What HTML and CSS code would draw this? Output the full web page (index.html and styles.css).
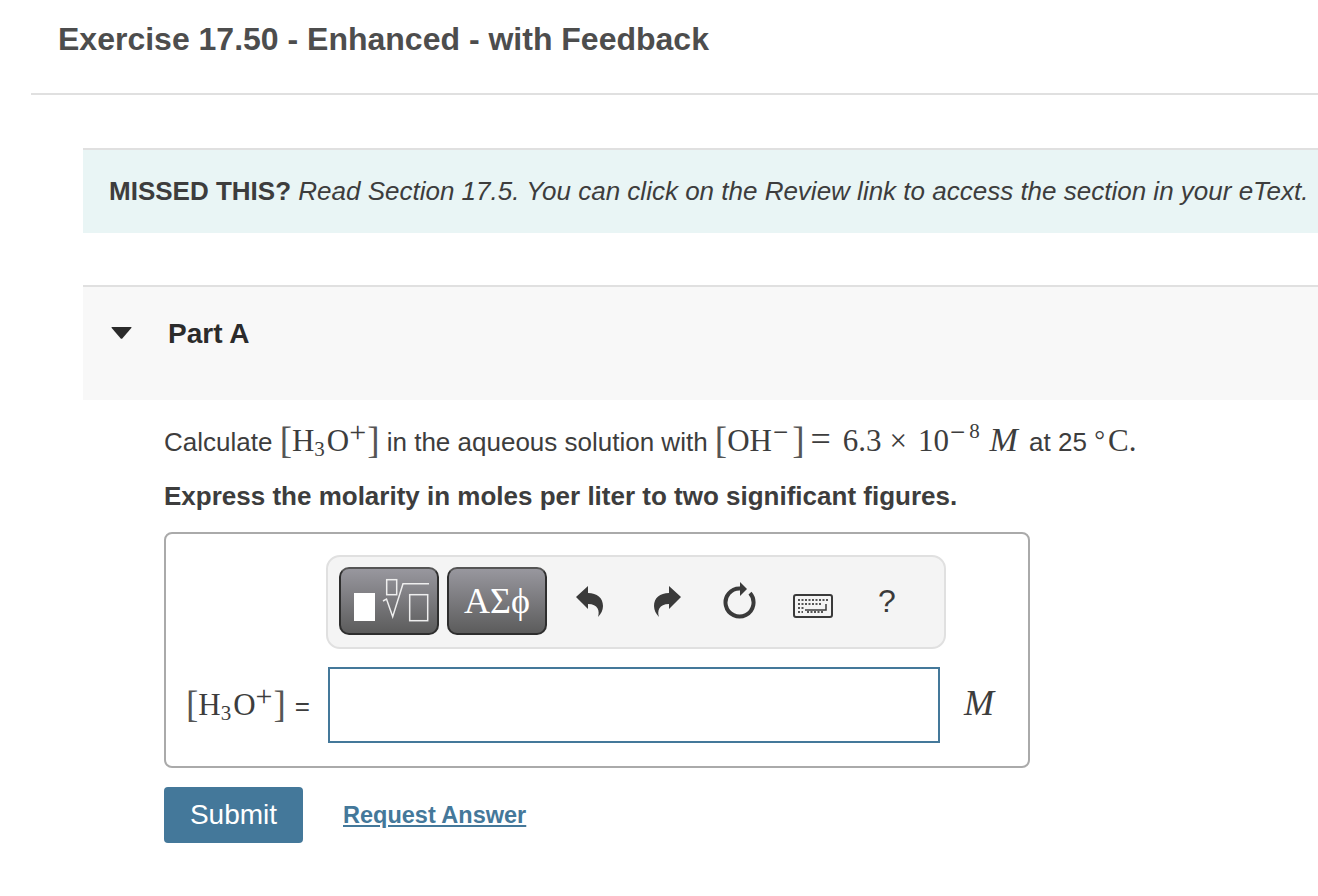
FILE: index.html
```html
<!DOCTYPE html>
<html lang="en">
<head>
  <meta charset="UTF-8" />
  <title>Exercise 17.50 - Enhanced - with Feedback</title>
  <link rel="stylesheet" href="styles.css">
</head>
<body>
  <header class="title-bar">
    <h1>Exercise 17.50 - Enhanced - with Feedback</h1>
  </header>

  <main class="content">
    <div class="note">
      <strong>MISSED THIS?</strong> <em>Read Section 17.5. You can click on the Review link to access the section in your eText.</em>
    </div>

    <div class="part-head">
      <svg class="caret" width="21" height="12" viewBox="0 0 21 12"><path d="M1 0H20Q21 0 20.300 1L11.300 11.500Q10.500 12 9.700 11.500L.7 1Q0 0 1 0Z" fill="#2b2b2b"/></svg>
      <h2>Part A</h2>
    </div>

    <section class="part-body">
      <p class="question">Calculate <span class="math"><span class="br">[</span>H<sub>3</sub>O<sup class="sign plus">+</sup><span class="br">]</span></span> in the aqueous solution with <span class="math"><span class="br">[</span>OH<sup class="sign minus">&minus;</sup><span class="br">]</span><span class="op equals">=</span>6.3<span class="op times">&times;</span>10<sup class="sign minus">&minus;</sup><sup>8</sup> <i class="var">M</i></span> at 25 <span class="math"><sup class="sign degree">&deg;</sup>C.</span></p>
      <p class="instruction">Express the molarity in moles per liter to two significant figures.</p>

      <div class="answer-box">
        <div class="toolbar">
          <button class="tool-btn" type="button">
            <svg width="96" height="64" viewBox="0 0 96 64">
              <rect x="13" y="24" width="21" height="28" fill="#fff"/>
              <g fill="none" stroke="#eee" stroke-width="1.500">
                <rect x="45.700" y="10.700" width="10" height="15"/>
                <path d="M42 32l3.500-2 6.200 17.700L62 14.700h26"/>
                <rect x="68.700" y="25.700" width="18" height="26"/>
              </g>
            </svg>
          </button>
          <button class="tool-btn greek" type="button">&Alpha;&Sigma;&#981;</button>
          <svg class="undo" width="28" height="31" viewBox="0 0 28 31"><path d="M0 11 12 0v7c9 0 15 5 15 13 0 4-2 8-5 11 2-6 0-13-10-13v5Z" fill="#3a3a3a"/></svg>
          <svg class="redo" width="28" height="31" viewBox="0 0 28 31"><path d="M28 11 16 0v7C7 7 1 12 1 20c0 4 2 8 5 11-2-6 0-13 10-13v5Z" fill="#3a3a3a"/></svg>
          <svg class="refresh" width="33" height="37" viewBox="0 0 33 37"><path d="M17 6.500A14 14 0 1 0 27 11.200" fill="none" stroke="#3a3a3a" stroke-width="4"/><path d="M17 0 24 7 17 14Z" fill="#3a3a3a"/></svg>
          <svg class="keyboard" width="40" height="24" viewBox="0 0 40 24">
            <rect x="1" y="1" width="38" height="22" rx="2" fill="none" stroke="#3a3a3a" stroke-width="2"/>
            <path d="M5 6h30M5 10h24M5 14h6M14 18h16M5 18h5" stroke="#555" stroke-width="2" stroke-dasharray="2 1.500"/>
            <path d="M33 10v6H12" fill="none" stroke="#3a3a3a" stroke-width="1.500"/>
          </svg>
          <span class="help">?</span>
        </div>

        <div class="answer-row">
          <span class="answer-label"><span class="math"><span class="br">[</span>H<sub>3</sub>O<sup class="sign plus">+</sup><span class="br">]</span></span><span class="label-eq">=</span></span>
          <input class="answer-input" type="text" aria-label="answer">
          <i class="unit">M</i>
        </div>
      </div>

      <div class="actions">
        <button class="submit" type="button">Submit</button>
        <a class="request" href="#">Request Answer</a>
      </div>
    </section>
  </main>
</body>
</html>
```

FILE: styles.css
```css
body {
  margin: 0;
  background-color: #fff;
  color: #3d3d3d;
  font-family: "Liberation Sans", Arial, sans-serif;
  font-size: 26px;
  overflow: hidden;
}
.title-bar {
  margin-left: 31px;
  height: 93px;
  padding-left: 27px;
  border-bottom: 2px solid #e0e0e0;
}
h1 {
  margin: 0;
  padding-top: 21px;
  font-size: 32px;
  line-height: 37px;
  color: #4d4d4d;
}
.content {
  margin-left: 83px;
}
.note {
  margin-top: 53px;
  height: 83px;
  padding-left: 26px;
  border-top: 2px solid #e0e0e0;
  background-color: #e9f5f5;
  line-height: 83px;
  white-space: nowrap;
  overflow: hidden;
}
.part-head {
  display: flex;
  align-items: flex-start;
  margin-top: 52px;
  height: 113px;
  padding-left: 28px;
  border-top: 2px solid #e0e0e0;
  background-color: #f8f8f8;
}
.caret {
  margin-top: 40px;
}
h2 {
  margin: 0 0 0 36px;
  padding-top: 32px;
  font-size: 28px;
  line-height: 30px;
  color: #2b2b2b;
}
.part-body {
  padding-left: 81px;
}
.math {
  font-family: "Liberation Serif", "Times New Roman", serif;
  font-size: 31px;
}
.math .br {
  font-size: 37px;
  line-height: 0;
  vertical-align: -2px;
  color: #555;
}
.op {
  margin: 0 9px;
}
.equals {
  margin: 0 12px 0 6px;
  font-size: 36px;
  line-height: 0;
}
.times {
  margin: 0 11px 0 8px;
}
.var {
  margin: 0 4px 0 2px;
  font-size: 34px;
  line-height: 0;
}
sub, sup {
  font-size: 21px;
  line-height: 0;
}
sup {
  vertical-align: 13px;
}
sub {
  vertical-align: -5px;
  margin: 0 2px 0 0;
}
.sign {
  font-size: 27px;
  vertical-align: 10px;
}
.plus {
  margin-right: 1px;
  font-size: 30px;
  vertical-align: 9px;
}
.minus {
  margin: 0 4px 0 1px;
}
.degree {
  margin-right: 3px;
  vertical-align: 2px;
}
.question {
  margin: 0;
  padding-top: 21px;
  height: 40px;
  line-height: 40px;
  white-space: nowrap;
}
.instruction {
  margin: 0;
  padding-top: 20px;
  line-height: 30px;
  font-weight: bold;
}
.answer-box {
  box-sizing: border-box;
  width: 866px;
  height: 236px;
  margin-top: 21px;
  padding: 21px 0 0 20px;
  border: 2px solid #aaa;
  border-radius: 8px;
}
.toolbar {
  box-sizing: border-box;
  display: flex;
  align-items: center;
  gap: 8px;
  width: 620px;
  height: 94px;
  margin-left: 140px;
  padding: 0 0 2px 11px;
  background-color: #f4f4f4;
  border: 2px solid #e0e0e0;
  border-radius: 14px;
}
.tool-btn {
  display: flex;
  align-items: center;
  justify-content: center;
  box-sizing: border-box;
  width: 100px;
  height: 68px;
  padding: 0;
  border: 2px solid #2e2e2e;
  border-top-color: #555;
  border-radius: 10px;
  background: linear-gradient(#98979e, #5c5c5c);
  color: #fff;
  font-family: "Liberation Serif", serif;
  font-size: 36px;
}
.undo {
  margin-left: 21px;
}
.redo {
  margin-left: 41px;
}
.refresh {
  margin-left: 34px;
  margin-top: -2px;
}
.keyboard {
  margin-left: 29px;
  margin-top: 10px;
}
.help {
  margin-left: 37px;
  font-size: 32px;
  color: #3a3a3a;
}
.answer-row {
  display: flex;
  align-items: center;
  margin-top: 18px;
}
.answer-label {
  width: 142px;
  white-space: nowrap;
}
.label-eq {
  margin-left: 9px;
}
.answer-input {
  box-sizing: border-box;
  width: 612px;
  height: 76px;
  border: 2px solid #44789a;
  background-color: #fff;
}
.unit {
  margin-left: 24px;
  margin-top: -4px;
  font-family: "Liberation Serif", serif;
  font-size: 36px;
}
.actions {
  display: flex;
  align-items: center;
  gap: 40px;
  margin-top: 19px;
}
.submit {
  width: 139px;
  height: 56px;
  border: 0;
  border-radius: 4px;
  background-color: #44789a;
  color: #fff;
  font-family: "Liberation Sans", Arial, sans-serif;
  font-size: 28px;
}
.request {
  color: #44789a;
  font-size: 23.500px;
  font-weight: bold;
}
```
